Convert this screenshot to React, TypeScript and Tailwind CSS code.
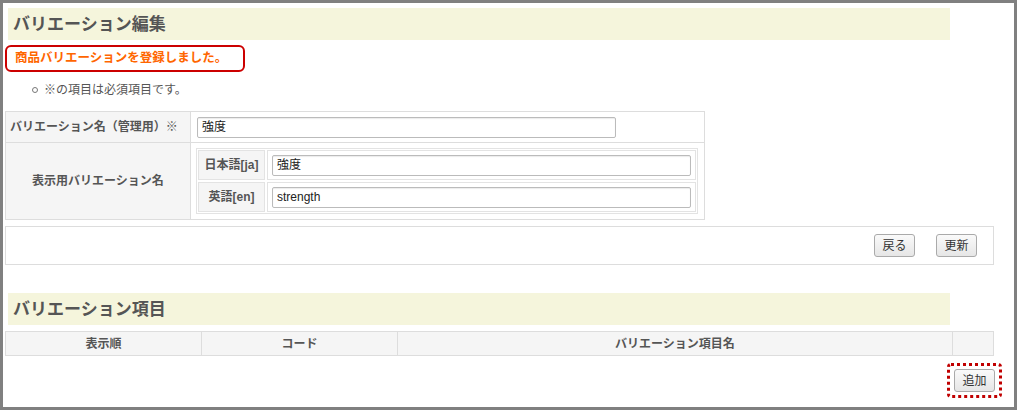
import React from 'react';

const font = { fontFamily: '"Liberation Sans", "Noto Sans CJK JP", sans-serif' };

const SectionHeading: React.FC<{ title: string; className?: string }> = ({ title, className }) => (
    <div className={`w-[942px] h-[32px] ml-[3px] bg-[#f5f5dc] flex items-center pl-[5px] ${className ?? ''}`}>
        <h2 className="text-[17px] font-bold text-[#555] leading-none">{title}</h2>
    </div>
);

const Button: React.FC<{ label: string }> = ({ label }) => (
    <button
        type="button"
        className="h-[23px] w-[41px] border border-[#aaa] rounded-[3px] bg-gradient-to-b from-[#fafafa] to-[#e6e6e6] text-[12px] text-[#333] leading-none"
    >
        {label}
    </button>
);

const TextInput: React.FC<{ value: string; className?: string }> = ({ value, className }) => (
    <div className={`h-[21px] border border-[#bbb] rounded-[2px] bg-white flex items-center px-[4px] text-[12px] text-[#222] shadow-[inset_0_1px_1px_rgba(0,0,0,0.08)] ${className ?? ''}`}>
        {value}
    </div>
);

export default function App() {
    return (
        <div className="w-[1017px] h-[410px] border-[3px] border-[#808080] bg-white overflow-hidden" style={font}>
            <div className="pl-[2px] pt-[5px]">
                <SectionHeading title="バリエーション編集" />

                {/* 登録完了メッセージ */}
                <div className="mt-[5px] w-[240px] h-[27px] border-[2.5px] border-[#cc0000] rounded-[6px] flex items-center pl-[8px]">
                    <span className="text-[12.5px] font-bold text-[#ff6600] leading-none">商品バリエーションを登録しました。</span>
                </div>

                <ul className="mt-[11px] ml-[27px] flex items-center gap-[6px] text-[12px] text-[#555] h-[14px]">
                    <li className="w-[6px] h-[6px] rounded-full border border-[#777]"></li>
                    <li>※の項目は必須項目です。</li>
                </ul>

                {/* 編集フォーム */}
                <div className="mt-[14px] w-[700px] border border-[#ddd] text-[12px]">
                    <div className="flex h-[31px] border-b border-[#ddd]">
                        <div className="w-[185px] bg-[#f5f5f5] border-r border-[#ddd] flex items-center pl-[4px] font-bold text-[#555]">
                            バリエーション名（管理用）※
                        </div>
                        <div className="flex-1 flex items-center pl-[6px]">
                            <TextInput value="強度" className="w-[419px]" />
                        </div>
                    </div>
                    <div className="flex h-[76px]">
                        <div className="w-[185px] bg-[#f5f5f5] border-r border-[#ddd] flex items-center justify-center font-bold text-[#555]">
                            表示用バリエーション名
                        </div>
                        <div className="flex-1 flex items-center pl-[5px]">
                            <div className="w-[502px] border border-[#e3e3e3] p-[1px] flex flex-col gap-[2px]">
                                {[
                                    { lang: '日本語[ja]', value: '強度' },
                                    { lang: '英語[en]', value: 'strength' },
                                ].map((row) => (
                                    <div key={row.lang} className="flex gap-[2px] h-[30px]">
                                        <div className="w-[67px] bg-[#f5f5f5] border border-[#e3e3e3] flex items-center justify-center font-bold text-[#555]">
                                            {row.lang}
                                        </div>
                                        <div className="flex-1 border border-[#e3e3e3] flex items-center px-[4px]">
                                            <TextInput value={row.value} className="w-full" />
                                        </div>
                                    </div>
                                ))}
                            </div>
                        </div>
                    </div>
                </div>

                <div className="mt-[6px] w-[989px] h-[39px] border border-[#ddd] flex items-center justify-end gap-[21px] pr-[16px]">
                    <Button label="戻る" />
                    <Button label="更新" />
                </div>

                <SectionHeading title="バリエーション項目" className="mt-[28px] h-[31px]" />

                {/* 項目一覧 */}
                <div className="mt-[6px] w-[989px] h-[25px] flex border border-[#ddd] bg-[#f5f5f5] text-[12px] font-bold text-[#555]">
                    <div className="w-[196px] border-r border-[#ddd] flex items-center justify-center">表示順</div>
                    <div className="w-[196px] border-r border-[#ddd] flex items-center justify-center">コード</div>
                    <div className="w-[555px] border-r border-[#ddd] flex items-center justify-center">バリエーション項目名</div>
                    <div className="flex-1"></div>
                </div>

                <div className="flex justify-end mt-[7px] pr-[12px]">
                    <div className="w-[55px] h-[35px] border-[3px] border-dotted border-[#c00000] rounded-[4px] flex items-center justify-center">
                        <Button label="追加" />
                    </div>
                </div>
            </div>
        </div>
    );
}
